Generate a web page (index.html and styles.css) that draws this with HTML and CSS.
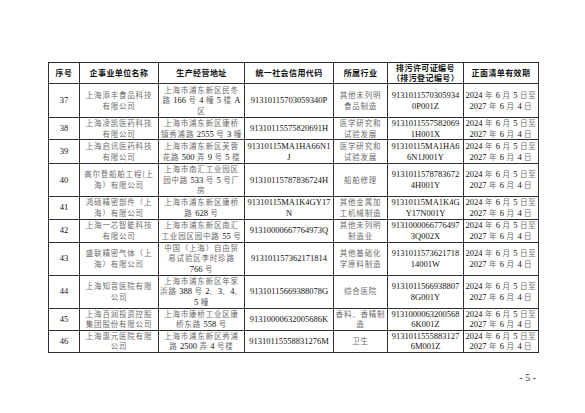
FILE: index.html
```html
<!DOCTYPE html>
<html lang="zh">
<head>
<meta charset="utf-8">
<title>正面清单</title>
<link rel="stylesheet" href="styles.css">
</head>
<body>
<div class="page">
<table class="list">
<colgroup>
<col class="c-no"><col class="c-name"><col class="c-addr"><col class="c-code"><col class="c-ind"><col class="c-permit"><col class="c-date">
</colgroup>
<thead>
<tr class="r-head">
<th>序号</th><th>企事业单位名称</th><th>生产经营地址</th><th>统一社会信用代码</th><th>所属行业</th><th>排污许可证编号<br>（排污登记编号）</th><th>正面清单有效期</th>
</tr>
</thead>
<tbody>
<tr class="r34">
<td class="num">37</td>
<td class="zh">上海添丰食品科技<br>有限公司</td>
<td class="zh">上海市浦东新区民冬<br>路 <span class="n">166</span> 号 <span class="n">4</span> 幢 <span class="n">5</span> 楼 <span class="n">A</span><br>区</td>
<td class="num">91310115703059340P</td>
<td class="zh">其他未列明<br>食品制造</td>
<td class="num">9131011570305934<br>0P001Z</td>
<td class="zh"><span class="n">2024</span> 年 <span class="n">6</span> 月 <span class="n">5</span> 日至<br><span class="n">2027</span> 年 <span class="n">6</span> 月 <span class="n">4</span> 日</td>
</tr>
<tr class="r22">
<td class="num">38</td>
<td class="zh">上海凌凯医药科技<br>有限公司</td>
<td class="zh">上海市浦东新区康桥<br>镇秀浦路 <span class="n">2555</span> 号 <span class="n">3</span> 幢</td>
<td class="num">91310115575820691H</td>
<td class="zh">医学研究和<br>试验发展</td>
<td class="num">9131011557582069<br>1H001X</td>
<td class="zh"><span class="n">2024</span> 年 <span class="n">6</span> 月 <span class="n">5</span> 日至<br><span class="n">2027</span> 年 <span class="n">6</span> 月 <span class="n">4</span> 日</td>
</tr>
<tr class="r24">
<td class="num">39</td>
<td class="zh">上海启讯医药科技<br>有限公司</td>
<td class="zh">上海市浦东新区芙蓉<br>花路 <span class="n">500</span> 弄 <span class="n">9</span> 号 <span class="n">5</span> 楼</td>
<td class="num">91310115MA1HA66N1<br>J</td>
<td class="zh">医学研究和<br>试验发展</td>
<td class="num">91310115MA1HA6<br>6N1J001Y</td>
<td class="zh"><span class="n">2024</span> 年 <span class="n">6</span> 月 <span class="n">5</span> 日至<br><span class="n">2027</span> 年 <span class="n">6</span> 月 <span class="n">4</span> 日</td>
</tr>
<tr class="r30">
<td class="num">40</td>
<td class="zh">高尔登船舶工程(上<br>海）有限公司</td>
<td class="zh">上海市南汇工业园区<br>园中路 <span class="n">533</span> 号 <span class="n">5</span> 号厂<br>房</td>
<td class="num">91310115787836724H</td>
<td class="zh">船舶修理</td>
<td class="num">9131011578783672<br>4H001Y</td>
<td class="zh"><span class="n">2024</span> 年 <span class="n">6</span> 月 <span class="n">5</span> 日至<br><span class="n">2027</span> 年 <span class="n">6</span> 月 <span class="n">4</span> 日</td>
</tr>
<tr class="r23">
<td class="num">41</td>
<td class="zh">鸿硕精密部件（上<br>海）有限公司</td>
<td class="zh">上海市浦东新区康桥<br>路 <span class="n">628</span> 号</td>
<td class="num">91310115MA1K4GY17<br>N</td>
<td class="zh">其他金属加<br>工机械制造</td>
<td class="num">91310115MA1K4G<br>Y17N001Y</td>
<td class="zh"><span class="n">2024</span> 年 <span class="n">6</span> 月 <span class="n">5</span> 日至<br><span class="n">2027</span> 年 <span class="n">6</span> 月 <span class="n">4</span> 日</td>
</tr>
<tr class="r23">
<td class="num">42</td>
<td class="zh">上海一芯智能科技<br>有限公司</td>
<td class="zh">上海市浦东新区南汇<br>工业园区园中路 <span class="n">55</span> 号</td>
<td class="num">91310000667764973Q</td>
<td class="zh">其他未列明<br>制造业</td>
<td class="num">9131000066776497<br>3Q002X</td>
<td class="zh"><span class="n">2024</span> 年 <span class="n">6</span> 月 <span class="n">5</span> 日至<br><span class="n">2027</span> 年 <span class="n">6</span> 月 <span class="n">4</span> 日</td>
</tr>
<tr class="r33">
<td class="num">43</td>
<td class="zh">盛联精密气体（上<br>海）有限公司</td>
<td class="zh">中国（上海）自由贸<br>易试验区李时珍路<br><span class="n">766</span> 号</td>
<td class="num">913101157362171814</td>
<td class="zh">其他基础化<br>学原料制造</td>
<td class="num">9131011573621718<br>14001W</td>
<td class="zh"><span class="n">2024</span> 年 <span class="n">6</span> 月 <span class="n">5</span> 日至<br><span class="n">2027</span> 年 <span class="n">6</span> 月 <span class="n">4</span> 日</td>
</tr>
<tr class="r33">
<td class="num">44</td>
<td class="zh">上海知音医院有限<br>公司</td>
<td class="zh">上海市浦东新区年家<br>浜路 <span class="n">388</span> 号 <span class="n">2</span>、<span class="n">3</span>、<span class="n">4</span>、<br><span class="n">5</span> 幢</td>
<td class="num">91310115669388078G</td>
<td class="zh">综合医院</td>
<td class="num">9131011566938807<br>8G001Y</td>
<td class="zh"><span class="n">2024</span> 年 <span class="n">6</span> 月 <span class="n">5</span> 日至<br><span class="n">2027</span> 年 <span class="n">6</span> 月 <span class="n">4</span> 日</td>
</tr>
<tr class="r21">
<td class="num">45</td>
<td class="zh">上海百润投资控股<br>集团股份有限公司</td>
<td class="zh">上海市康桥工业区康<br>桥东路 <span class="n">558</span> 号</td>
<td class="num">91310000632005686K</td>
<td class="zh">香料、香精制<br>造</td>
<td class="num">9131000063200568<br>6K001Z</td>
<td class="zh"><span class="n">2024</span> 年 <span class="n">6</span> 月 <span class="n">5</span> 日至<br><span class="n">2027</span> 年 <span class="n">6</span> 月 <span class="n">4</span> 日</td>
</tr>
<tr class="r22">
<td class="num">46</td>
<td class="zh">上海惠元医院有限<br>公司</td>
<td class="zh">上海市浦东新区秀浦<br>路 <span class="n">2500</span> 弄 <span class="n">4</span> 号楼</td>
<td class="num">91310115558831276M</td>
<td class="zh">卫生</td>
<td class="num">9131011555883127<br>6M001Z</td>
<td class="zh"><span class="n">2024</span> 年 <span class="n">6</span> 月 <span class="n">5</span> 日至<br><span class="n">2027</span> 年 <span class="n">6</span> 月 <span class="n">4</span> 日</td>
</tr>
</tbody>
</table>
<div class="pageno">- 5 -</div>
</div>
</body>
</html>
```

FILE: styles.css
```css
html, body {
  margin: 0;
  padding: 0;
  background: #ffffff;
}

.page {
  padding: 62px 0 0 48px;
  width: 490px;
}

.list {
  border-collapse: collapse;
  table-layout: fixed;
  width: 490px;
  font-family: "Liberation Serif", "Noto Sans CJK SC", serif;
  font-size: 8.5px;
  line-height: 10.5px;
  color: #1a1a1a;
}

.c-no { width: 31px; }
.c-name { width: 79px; }
.c-addr { width: 86px; }
.c-code { width: 89px; }
.c-ind { width: 54px; }
.c-permit { width: 76px; }
.c-date { width: 75px; }

.list th,
.list td {
  border: 1px solid #2e2e2e;
  padding: 0;
  text-align: center;
  vertical-align: middle;
  overflow: hidden;
  white-space: nowrap;
}

.list th {
  font-family: "Noto Sans CJK SC", sans-serif;
  font-weight: 700;
  font-size: 8px;
  line-height: 10px;
  color: #111111;
  letter-spacing: 0.4px;
}

.r-head { height: 21px; }
.r34 { height: 34px; }
.r33 { height: 33px; }
.r30 { height: 30px; }
.r24 { height: 24px; }
.r23 { height: 23px; }
.r22 { height: 22px; }
.r21 { height: 21px; }

.list td.num {
  color: #111111;
  font-size: 8.5px;
}

.list td.zh {
  font-family: "Noto Sans CJK SC", sans-serif;
  font-size: 7.5px;
  letter-spacing: 0.8px;
  color: #6a6a6a;
  font-weight: 400;
}

.list td.zh .n {
  font-family: "Liberation Serif", serif;
  font-size: 8.5px;
  letter-spacing: 0;
  color: #111111;
}

.pageno {
  margin-top: 19px;
  text-align: right;
  padding-right: 2px;
  font-family: "Liberation Serif", serif;
  font-size: 10px;
  line-height: 12px;
  color: #333333;
}
```
